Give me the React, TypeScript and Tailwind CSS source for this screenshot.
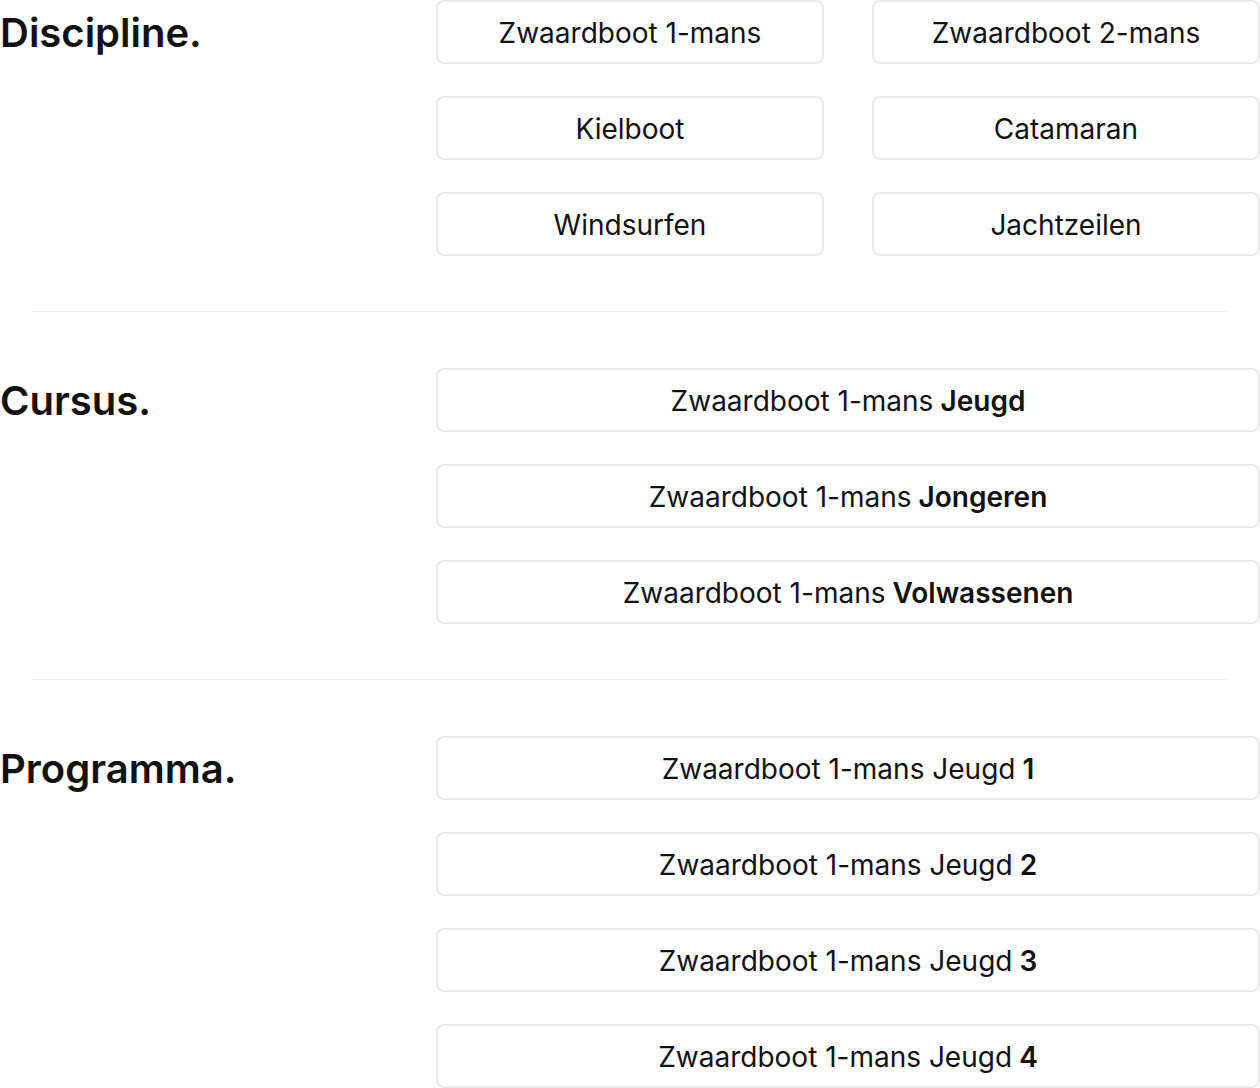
import React from 'react';

type Option = { base: string; bold?: string };

const sections: { title: string; cols: 1 | 2; options: Option[] }[] = [
  {
    title: 'Discipline.',
    cols: 2,
    options: [
      { base: 'Zwaardboot 1-mans' },
      { base: 'Zwaardboot 2-mans' },
      { base: 'Kielboot' },
      { base: 'Catamaran' },
      { base: 'Windsurfen' },
      { base: 'Jachtzeilen' },
    ],
  },
  {
    title: 'Cursus.',
    cols: 1,
    options: [
      { base: 'Zwaardboot 1-mans', bold: 'Jeugd' },
      { base: 'Zwaardboot 1-mans', bold: 'Jongeren' },
      { base: 'Zwaardboot 1-mans', bold: 'Volwassenen' },
    ],
  },
  {
    title: 'Programma.',
    cols: 1,
    options: [
      { base: 'Zwaardboot 1-mans Jeugd', bold: '1' },
      { base: 'Zwaardboot 1-mans Jeugd', bold: '2' },
      { base: 'Zwaardboot 1-mans Jeugd', bold: '3' },
      { base: 'Zwaardboot 1-mans Jeugd', bold: '4' },
    ],
  },
];

function OptionButton({ option }: { option: Option }) {
  return (
    <button
      type="button"
      className="h-16 w-full rounded-lg border-2 border-[#e8e8e8] bg-white text-[28px] text-[#111111] flex items-center justify-center"
    >
      <span className="pt-px">
        {option.base}
        {option.bold && <strong className="font-semibold"> {option.bold}</strong>}
      </span>
    </button>
  );
}

export default function App() {
  return (
    <div className="w-[1260px] bg-white font-['Inter',sans-serif]">
      {sections.map((section, i) => (
        <div key={section.title}>
          {/* divider between sections */}
          {i > 0 && <div className="mx-8 mt-[55px] mb-[56px] h-px bg-[#f0f0f0]" />}
          <div className="flex">
            <h2 className="w-[436px] h-16 pt-px flex items-center text-[40px] font-semibold text-[#111111]">
              {section.title}
            </h2>
            <div
              className={
                section.cols === 2
                  ? 'flex-1 grid grid-cols-2 gap-x-12 gap-y-8'
                  : 'flex-1 flex flex-col gap-8'
              }
            >
              {section.options.map((option, j) => (
                <OptionButton key={j} option={option} />
              ))}
            </div>
          </div>
        </div>
      ))}
    </div>
  );
}
